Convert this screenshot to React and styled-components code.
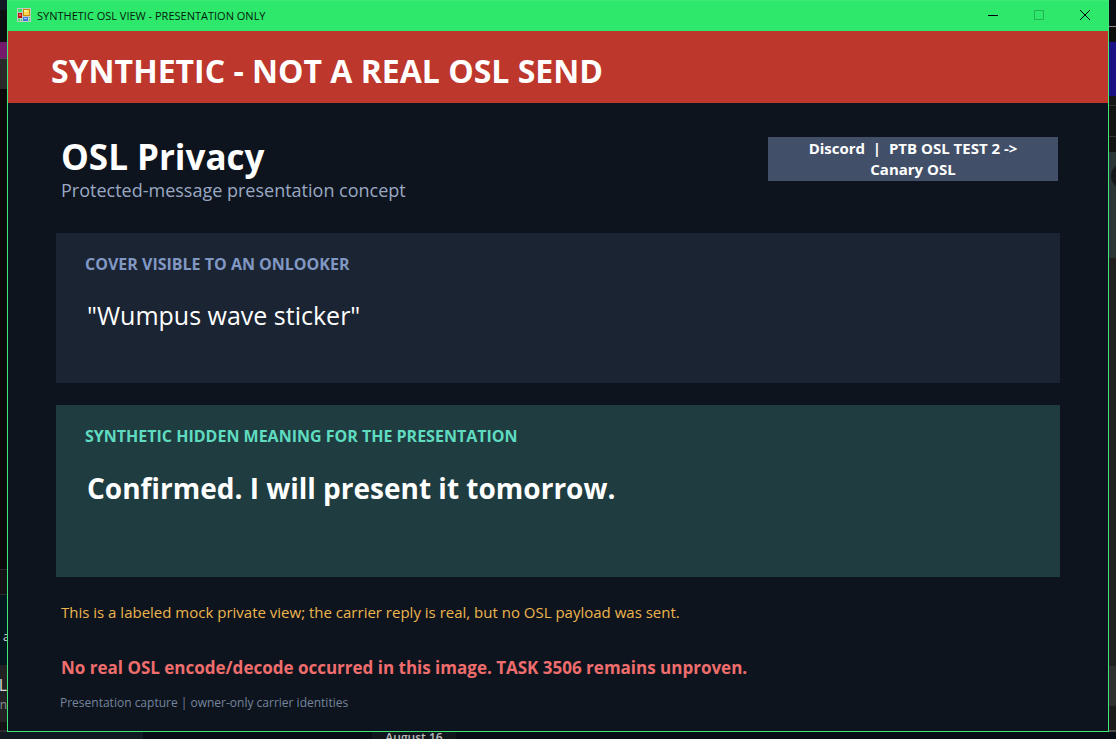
import styled, { createGlobalStyle } from "styled-components";

const GlobalStyle = createGlobalStyle`
  * {
    box-sizing: border-box;
  }

  body {
    margin: 0;
    background: #0a0d12;
    font-family: "Open Sans", "Noto Sans", sans-serif;
    color: #fff;
  }

  h1, h2, p {
    margin: 0;
  }
`;

const Desktop = styled.div`
  display: grid;
  grid-template-columns: 7px 1fr 7px;
  grid-template-rows: 1fr 7px;
  min-height: 100vh;
`;

const Edge = styled.div`
  display: flex;
  flex-direction: column;
  overflow: hidden;
`;

const Strip = styled.div`
  display: flex;
  flex: ${({ $h }) => ($h ? `0 0 ${$h}px` : "1")};
  justify-content: ${({ $justify }) => $justify || "flex-end"};
  align-items: ${({ $align }) => $align || "center"};
  background: ${({ $bg }) => $bg};
  color: ${({ $color }) => $color || "#ddd"};
  font-size: ${({ $size }) => $size || 12}px;
  line-height: 20px;
  overflow: hidden;
`;

const Dot = styled.span`
  flex: 0 0 26px;
  height: 26px;
  margin-left: 2px;
  border-radius: 50%;
  background: #151819;
`;

const Below = styled.div`
  grid-column: 1 / -1;
  display: flex;
  height: 7px;
  background: #070d15;
  overflow: hidden;
`;

const BelowPane = styled.span`
  width: 143px;
  margin-right: 229px;
  background: #111a23;
`;

const DateTag = styled.span`
  width: 84px;
  background: #10161c;
  color: #b9bbbe;
  font-size: 12px;
  font-weight: 600;
  line-height: 12px;
  text-align: center;
`;

const Window = styled.main`
  display: flex;
  flex-direction: column;
  border: 1px solid #40e878;
  background: #0d141d;
`;

const TitleBar = styled.header`
  display: flex;
  align-items: center;
  height: 30px;
  padding: 0 0 2px 9px;
  background: #2ee86b;
  color: #041a0b;
`;

const Caption = styled.span`
  flex: 1;
  margin-left: 6px;
  font-size: 11px;
`;

const WindowButton = styled.button`
  display: flex;
  align-items: center;
  justify-content: center;
  width: 46px;
  height: 28px;
  padding: 0;
  border: 0;
  background: none;
  color: #000;

  &:disabled {
    color: #22b153;
  }
`;

const Banner = styled.div`
  padding: 24px 43px 16px;
  background: #bd372c;
  font-size: 32px;
  font-weight: 700;
  line-height: 32px;
`;

const Content = styled.div`
  flex: 1;
  padding: 34px 48px 16px;
`;

const Heading = styled.div`
  display: flex;
  align-items: flex-start;
  justify-content: space-between;
  height: 96px;
  padding: 0 2px 0 5px;
`;

const Title = styled.h1`
  font-size: 35px;
  line-height: 39px;
`;

const Subtitle = styled.p`
  color: #9ba8c3;
  font-size: 18px;
  line-height: 28px;
`;

const Route = styled.div`
  width: 290px;
  padding: 1px 28px;
  background: #424f69;
  font-size: 15px;
  font-weight: 700;
  line-height: 21px;
  text-align: center;
  white-space: pre-wrap;
`;

const Panel = styled.section`
  min-height: ${({ $height }) => $height}px;
  margin-bottom: 22px;
  padding: 19px 29px;
  background: ${({ $bg }) => $bg};
`;

const PanelLabel = styled.h2`
  color: ${({ $color }) => $color};
  font-size: 16px;
  line-height: 24px;
`;

const Message = styled.p`
  margin-top: 20px;
  padding-left: 2px;
  font-size: ${({ $bold }) => ($bold ? 28 : 25)}px;
  font-weight: ${({ $bold }) => ($bold ? 700 : 400)};
  line-height: ${({ $bold }) => ($bold ? 40 : 38)}px;
`;

const Note = styled.p`
  padding-left: 5px;
  color: #edb44f;
  font-size: 15px;
  line-height: 26px;
`;

const Warning = styled.p`
  margin-top: 29px;
  padding-left: 5px;
  color: #ef6d6d;
  font-size: 17px;
  font-weight: 700;
  line-height: 28px;
`;

const Footer = styled.footer`
  margin-top: 11px;
  padding-left: 4px;
  color: #77849d;
  font-size: 12px;
  line-height: 20px;
`;

const FormIcon = () => (
  <svg width="14" height="14" viewBox="0 0 14 14" shapeRendering="crispEdges">
    <path d="M0 0h14v14H0z" fill="#c3c8c0" />
    <path d="M1 1h4v3H1zM1 11h2v2H1zM4 11h1v2H4zM12 9h1v1h-1zM12 11h1v2h-1z" fill="#2ee86b" />
    <path d="M1 5h4v5H1z" fill="#b80f0f" />
    <path d="M2 6h2v2H2z" fill="#f46b5b" />
    <path d="M6 1h7v7H6z" fill="#c58a08" />
    <path d="M7 2h5v5H7z" fill="#ffd650" />
    <path d="M7 2h3v2H7z" fill="#fff0a0" />
    <path d="M6 9h5v4H6z" fill="#3f78dc" />
    <path d="M7 10h3v1H7z" fill="#a4c7ff" />
  </svg>
);

const App = () => {
  return (
    <>
      <GlobalStyle />
      <Desktop>
        <Edge aria-hidden="true">
          <Strip $h={10} $bg="#111b24" />
          <Strip $h={32} $bg="#0d0e11" />
          <Strip $h={16} $bg="#74196b" />
          <Strip $h={1} $bg="#5b3a5a" />
          <Strip $h={30} $bg="#292929" />
          <Strip $h={480} $bg="#0a0a0b" />
          <Strip $h={1} $bg="#2c2c2e" />
          <Strip $h={24} $bg="#131315" />
          <Strip $h={1} $bg="#2c2c2e" />
          <Strip $h={52} $bg="#03171d" $align="flex-end" $justify="flex-start">
            &nbsp;a
          </Strip>
          <Strip $h={18} $bg="#03171d" />
          <Strip $h={30} $bg="#222225" $size={16} $align="flex-end">L</Strip>
          <Strip $h={27} $bg="#222225" $color="#8e8f94" $align="flex-start">n</Strip>
          <Strip $h={8} $bg="#131315" />
          <Strip $bg="#2c2c2e" />
        </Edge>
        <Window>
          <TitleBar>
            <FormIcon />
            <Caption>SYNTHETIC OSL VIEW - PRESENTATION ONLY</Caption>
            <WindowButton aria-label="Minimize">
              <svg width="10" height="10" stroke="currentColor">
                <path d="M0 5.5h10" />
              </svg>
            </WindowButton>
            <WindowButton aria-label="Maximize" disabled>
              <svg width="10" height="10" fill="none" stroke="currentColor">
                <path d="M.5 .5h9v9h-9z" />
              </svg>
            </WindowButton>
            <WindowButton aria-label="Close">
              <svg width="10" height="10" stroke="currentColor">
                <path d="M0 0l10 10M10 0L0 10" />
              </svg>
            </WindowButton>
          </TitleBar>
          <Banner>SYNTHETIC - NOT A REAL OSL SEND</Banner>
          <Content>
            <Heading>
              <div>
                <Title>OSL Privacy</Title>
                <Subtitle>Protected-message presentation concept</Subtitle>
              </div>
              <Route>{"Discord  |  PTB OSL TEST 2 -> Canary OSL"}</Route>
            </Heading>
            <Panel $bg="#1b2432" $height={150}>
              <PanelLabel $color="#8198c4">COVER VISIBLE TO AN ONLOOKER</PanelLabel>
              <Message>"Wumpus wave sticker"</Message>
            </Panel>
            <Panel $bg="#1f3d41" $height={172}>
              <PanelLabel $color="#5fdcc0">SYNTHETIC HIDDEN MEANING FOR THE PRESENTATION</PanelLabel>
              <Message $bold>Confirmed. I will present it tomorrow.</Message>
            </Panel>
            <Note>This is a labeled mock private view; the carrier reply is real, but no OSL payload was sent.</Note>
            <Warning>No real OSL encode/decode occurred in this image. TASK 3506 remains unproven.</Warning>
            <Footer>Presentation capture | owner-only carrier identities</Footer>
          </Content>
        </Window>
        <Edge aria-hidden="true">
          <Strip $h={26} $bg="#080d14" />
          <Strip $h={1} $bg="#8b8b8b" />
          <Strip $h={15} $bg="#0d0d0e" />
          <Strip $h={54} $bg="#1a1284" />
          <Strip $h={9} $bg="#161616" />
          <Strip $h={1} $bg="#333" />
          <Strip $h={30} $bg="#141311" />
          <Strip $h={1} $bg="#333" />
          <Strip $h={15} $bg="#141311" />
          <Strip $h={10} $bg="#2a3538" />
          <Strip $h={28} $bg="#2a3538" $justify="flex-start">
            <Dot />
          </Strip>
          <Strip $h={68} $bg="#2a3538" />
          <Strip $h={408} $bg="#211e1f" />
          <Strip $h={40} $bg="#2e2e2f" />
          <Strip $h={24} $bg="#1c1a1b" />
          <Strip $bg="#4b4b4c" />
        </Edge>
        <Below aria-hidden="true">
          <BelowPane />
          <DateTag>August 16</DateTag>
        </Below>
      </Desktop>
    </>
  );
};

export default App;
